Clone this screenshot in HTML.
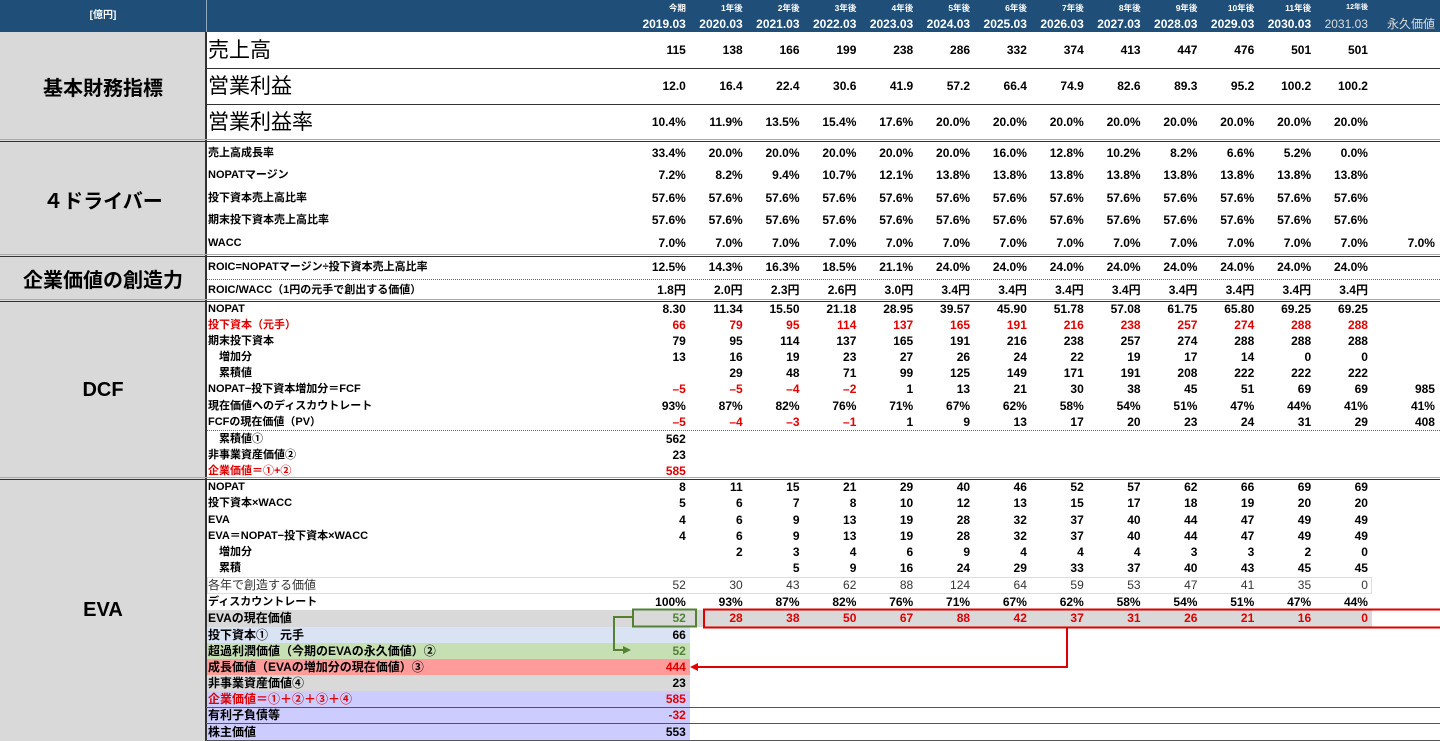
<!DOCTYPE html>
<html><head><meta charset="utf-8">
<style>
*{margin:0;padding:0;box-sizing:border-box}
body{width:1440px;height:741px;background:#fff;position:relative;overflow:hidden;font-family:"Liberation Sans","Noto Sans CJK JP",sans-serif;font-size:11px;color:#000}
.a{position:absolute}
.hd{position:absolute;left:0;top:0;width:1440px;height:32px;background:#1f4e79;color:#fff}
.hr{position:absolute;left:633px;display:flex}
.hr i{font-style:normal;width:56.85px;text-align:right;padding-right:4px;font-weight:bold}
.r{position:absolute;left:208px;display:flex;white-space:nowrap;font-weight:bold}
.r .l{width:425px;overflow:visible}
.r i{font-style:normal;width:56.85px;text-align:right;padding-right:4px;font-size:12px}
.r i.p{width:66px;padding-right:3px}
.red{color:#e00000}
.g{color:#548235}
.n{font-weight:normal}
.big{font-size:21px;font-weight:normal}
.b12{font-size:12px}
.sec{position:absolute;left:0;width:206px;display:flex;align-items:center;justify-content:center;font-size:20px;font-weight:bold}
.ln{position:absolute;left:206px;width:1234px;height:1px;background:#333}
.sl{position:absolute;left:0;width:1440px;height:3px;border-top:1px solid #aaa;border-bottom:1px solid #333}
</style></head><body>
<div class="a" style="left:0;top:32px;width:206px;height:709px;background:#d9d9d9"></div>
<div class="a" style="left:205px;top:32px;width:2px;height:709px;background:#333"></div>
<div class="hd">
<div class="a" style="left:0;top:0;width:206px;height:32px;line-height:32px;text-align:center;font-size:10px;font-weight:bold">[億円]</div>
<div class="a" style="left:206px;top:0;width:1px;height:32px;background:#fff;opacity:.5"></div>
<div class="hr" style="top:3px;font-size:8.5px;line-height:10px"><i>今期</i><i>1年後</i><i>2年後</i><i>3年後</i><i>4年後</i><i>5年後</i><i>6年後</i><i>7年後</i><i>8年後</i><i>9年後</i><i>10年後</i><i>11年後</i><i style="font-size:7px">12年後</i></div>
<div class="hr" style="top:17px;font-size:12px;line-height:14px"><i>2019.03</i><i>2020.03</i><i>2021.03</i><i>2022.03</i><i>2023.03</i><i>2024.03</i><i>2025.03</i><i>2026.03</i><i>2027.03</i><i>2028.03</i><i>2029.03</i><i>2030.03</i><i style="font-weight:normal;color:#ddd">2031.03</i><i style="width:66px;font-weight:normal;color:#ddd;padding-right:3px">永久価値</i></div>
</div>

<div class="sec" style="top:33px;height:107px">基本財務指標</div>
<div class="sec" style="top:143px;height:112px">４ドライバー</div>
<div class="sec" style="top:257px;height:43px">企業価値の創造力</div>
<div class="sec" style="top:302px;height:176px">DCF</div>
<div class="sec" style="top:480px;height:261px">EVA</div>

<div class="r" style="top:33px;height:35px;line-height:35px"><span class="l big">売上高</span><i>115</i><i>138</i><i>166</i><i>199</i><i>238</i><i>286</i><i>332</i><i>374</i><i>413</i><i>447</i><i>476</i><i>501</i><i>501</i></div>
<div class="ln" style="top:68px"></div>
<div class="r" style="top:69px;height:35px;line-height:35px"><span class="l big">営業利益</span><i>12.0</i><i>16.4</i><i>22.4</i><i>30.6</i><i>41.9</i><i>57.2</i><i>66.4</i><i>74.9</i><i>82.6</i><i>89.3</i><i>95.2</i><i>100.2</i><i>100.2</i></div>
<div class="ln" style="top:104px"></div>
<div class="r" style="top:105px;height:35px;line-height:35px"><span class="l big">営業利益率</span><i>10.4%</i><i>11.9%</i><i>13.5%</i><i>15.4%</i><i>17.6%</i><i>20.0%</i><i>20.0%</i><i>20.0%</i><i>20.0%</i><i>20.0%</i><i>20.0%</i><i>20.0%</i><i>20.0%</i></div>
<div class="sl" style="top:139px"></div>

<div class="r" style="top:143px;height:20px;line-height:20px"><span class="l">売上高成長率</span><i>33.4%</i><i>20.0%</i><i>20.0%</i><i>20.0%</i><i>20.0%</i><i>20.0%</i><i>16.0%</i><i>12.8%</i><i>10.2%</i><i>8.2%</i><i>6.6%</i><i>5.2%</i><i>0.0%</i></div>
<div class="r" style="top:165px;height:20px;line-height:20px"><span class="l">NOPATマージン</span><i>7.2%</i><i>8.2%</i><i>9.4%</i><i>10.7%</i><i>12.1%</i><i>13.8%</i><i>13.8%</i><i>13.8%</i><i>13.8%</i><i>13.8%</i><i>13.8%</i><i>13.8%</i><i>13.8%</i></div>
<div class="r" style="top:188px;height:20px;line-height:20px"><span class="l">投下資本売上高比率</span><i>57.6%</i><i>57.6%</i><i>57.6%</i><i>57.6%</i><i>57.6%</i><i>57.6%</i><i>57.6%</i><i>57.6%</i><i>57.6%</i><i>57.6%</i><i>57.6%</i><i>57.6%</i><i>57.6%</i></div>
<div class="r" style="top:210px;height:20px;line-height:20px"><span class="l">期末投下資本売上高比率</span><i>57.6%</i><i>57.6%</i><i>57.6%</i><i>57.6%</i><i>57.6%</i><i>57.6%</i><i>57.6%</i><i>57.6%</i><i>57.6%</i><i>57.6%</i><i>57.6%</i><i>57.6%</i><i>57.6%</i></div>
<div class="r" style="top:233px;height:20px;line-height:20px"><span class="l">WACC</span><i>7.0%</i><i>7.0%</i><i>7.0%</i><i>7.0%</i><i>7.0%</i><i>7.0%</i><i>7.0%</i><i>7.0%</i><i>7.0%</i><i>7.0%</i><i>7.0%</i><i>7.0%</i><i>7.0%</i><i class="p">7.0%</i></div>
<div class="sl" style="top:254px"></div>

<div class="r" style="top:257px;height:21px;line-height:21px"><span class="l">ROIC=NOPATマージン÷投下資本売上高比率</span><i>12.5%</i><i>14.3%</i><i>16.3%</i><i>18.5%</i><i>21.1%</i><i>24.0%</i><i>24.0%</i><i>24.0%</i><i>24.0%</i><i>24.0%</i><i>24.0%</i><i>24.0%</i><i>24.0%</i></div>
<div class="a" style="left:207px;top:279px;width:1233px;border-top:1px dotted #666"></div>
<div class="r" style="top:280px;height:20px;line-height:20px"><span class="l">ROIC/WACC（1円の元手で創出する価値）</span><i>1.8円</i><i>2.0円</i><i>2.3円</i><i>2.6円</i><i>3.0円</i><i>3.4円</i><i>3.4円</i><i>3.4円</i><i>3.4円</i><i>3.4円</i><i>3.4円</i><i>3.4円</i><i>3.4円</i></div>
<div class="sl" style="top:299px"></div>

<div class="r" style="top:301px;height:16px;line-height:16px"><span class="l">NOPAT</span><i>8.30</i><i>11.34</i><i>15.50</i><i>21.18</i><i>28.95</i><i>39.57</i><i>45.90</i><i>51.78</i><i>57.08</i><i>61.75</i><i>65.80</i><i>69.25</i><i>69.25</i></div>
<div class="r red" style="top:317px;height:16px;line-height:16px"><span class="l">投下資本（元手）</span><i>66</i><i>79</i><i>95</i><i>114</i><i>137</i><i>165</i><i>191</i><i>216</i><i>238</i><i>257</i><i>274</i><i>288</i><i>288</i></div>
<div class="r" style="top:333px;height:16px;line-height:16px"><span class="l">期末投下資本</span><i>79</i><i>95</i><i>114</i><i>137</i><i>165</i><i>191</i><i>216</i><i>238</i><i>257</i><i>274</i><i>288</i><i>288</i><i>288</i></div>
<div class="r" style="top:349px;height:16px;line-height:16px"><span class="l">　増加分</span><i>13</i><i>16</i><i>19</i><i>23</i><i>27</i><i>26</i><i>24</i><i>22</i><i>19</i><i>17</i><i>14</i><i>0</i><i>0</i></div>
<div class="r" style="top:365px;height:16px;line-height:16px"><span class="l">　累積値</span><i></i><i>29</i><i>48</i><i>71</i><i>99</i><i>125</i><i>149</i><i>171</i><i>191</i><i>208</i><i>222</i><i>222</i><i>222</i></div>
<div class="r" style="top:381px;height:16px;line-height:16px"><span class="l">NOPAT−投下資本増加分＝FCF</span><i class="red">–5</i><i class="red">–5</i><i class="red">–4</i><i class="red">–2</i><i>1</i><i>13</i><i>21</i><i>30</i><i>38</i><i>45</i><i>51</i><i>69</i><i>69</i><i class="p">985</i></div>
<div class="r" style="top:398px;height:16px;line-height:16px"><span class="l">現在価値へのディスカウトレート</span><i>93%</i><i>87%</i><i>82%</i><i>76%</i><i>71%</i><i>67%</i><i>62%</i><i>58%</i><i>54%</i><i>51%</i><i>47%</i><i>44%</i><i>41%</i><i class="p">41%</i></div>
<div class="r" style="top:414px;height:16px;line-height:16px"><span class="l">FCFの現在価値（PV）</span><i class="red">–5</i><i class="red">–4</i><i class="red">–3</i><i class="red">–1</i><i>1</i><i>9</i><i>13</i><i>17</i><i>20</i><i>23</i><i>24</i><i>31</i><i>29</i><i class="p">408</i></div>
<div class="a" style="left:207px;top:430px;width:1233px;border-top:1px dotted #666"></div>
<div class="r" style="top:431px;height:16px;line-height:16px"><span class="l">　累積値①</span><i>562</i></div>
<div class="r" style="top:447px;height:16px;line-height:16px"><span class="l">非事業資産価値②</span><i>23</i></div>
<div class="r red" style="top:463px;height:16px;line-height:16px"><span class="l">企業価値＝①+②</span><i>585</i></div>
<div class="sl" style="top:477px"></div>

<div class="r" style="top:479px;height:16px;line-height:16px"><span class="l">NOPAT</span><i>8</i><i>11</i><i>15</i><i>21</i><i>29</i><i>40</i><i>46</i><i>52</i><i>57</i><i>62</i><i>66</i><i>69</i><i>69</i></div>
<div class="r" style="top:495px;height:16px;line-height:16px"><span class="l">投下資本×WACC</span><i>5</i><i>6</i><i>7</i><i>8</i><i>10</i><i>12</i><i>13</i><i>15</i><i>17</i><i>18</i><i>19</i><i>20</i><i>20</i></div>
<div class="r" style="top:512px;height:16px;line-height:16px"><span class="l">EVA</span><i>4</i><i>6</i><i>9</i><i>13</i><i>19</i><i>28</i><i>32</i><i>37</i><i>40</i><i>44</i><i>47</i><i>49</i><i>49</i></div>
<div class="r" style="top:528px;height:16px;line-height:16px"><span class="l">EVA＝NOPAT−投下資本×WACC</span><i>4</i><i>6</i><i>9</i><i>13</i><i>19</i><i>28</i><i>32</i><i>37</i><i>40</i><i>44</i><i>47</i><i>49</i><i>49</i></div>
<div class="r" style="top:544px;height:16px;line-height:16px"><span class="l">　増加分</span><i></i><i>2</i><i>3</i><i>4</i><i>6</i><i>9</i><i>4</i><i>4</i><i>4</i><i>3</i><i>3</i><i>2</i><i>0</i></div>
<div class="r" style="top:560px;height:16px;line-height:16px"><span class="l">　累積</span><i></i><i></i><i>5</i><i>9</i><i>16</i><i>24</i><i>29</i><i>33</i><i>37</i><i>40</i><i>43</i><i>45</i><i>45</i></div>
<div class="a" style="left:207px;top:577px;width:1165px;height:17px;border:1px solid #ddd"></div>
<div class="r n" style="top:577px;height:16px;line-height:16px;color:#333;font-weight:normal"><span class="l b12">各年で創造する価値</span><i>52</i><i>30</i><i>43</i><i>62</i><i>88</i><i>124</i><i>64</i><i>59</i><i>53</i><i>47</i><i>41</i><i>35</i><i>0</i></div>
<div class="r" style="top:594px;height:16px;line-height:16px"><span class="l">ディスカウントレート</span><i>100%</i><i>93%</i><i>87%</i><i>82%</i><i>76%</i><i>71%</i><i>67%</i><i>62%</i><i>58%</i><i>54%</i><i>51%</i><i>47%</i><i>44%</i></div>
<div class="a" style="left:207px;top:610px;width:1165px;height:17px;background:#d9d9d9"></div>
<div class="r" style="top:610px;height:17px;line-height:17px"><span class="l b12">EVAの現在価値</span><i class="g">52</i><i class="red">28</i><i class="red">38</i><i class="red">50</i><i class="red">67</i><i class="red">88</i><i class="red">42</i><i class="red">37</i><i class="red">31</i><i class="red">26</i><i class="red">21</i><i class="red">16</i><i class="red">0</i></div>
<div class="a" style="left:207px;top:627px;width:483px;height:16px;background:#dae3f3"></div>
<div class="a" style="left:207px;top:643px;width:483px;height:16px;background:#c6e0b4"></div>
<div class="a" style="left:207px;top:659px;width:483px;height:16px;background:#ff9b9b"></div>
<div class="a" style="left:207px;top:675px;width:483px;height:16px;background:#d9d9d9"></div>
<div class="a" style="left:207px;top:691px;width:483px;height:50px;background:#ccccff"></div>
<div class="r" style="top:627px;height:16px;line-height:16px"><span class="l b12">投下資本①　元手</span><i>66</i></div>
<div class="r g" style="top:643px;height:16px;line-height:16px"><span class="l b12" style="color:#000">超過利潤価値（今期のEVAの永久価値）②</span><i>52</i></div>
<div class="r" style="top:659px;height:16px;line-height:16px"><span class="l b12">成長価値（EVAの増加分の現在価値）③</span><i class="red">444</i></div>
<div class="r" style="top:675px;height:16px;line-height:16px"><span class="l b12">非事業資産価値④</span><i>23</i></div>
<div class="r red" style="top:691px;height:16px;line-height:16px"><span class="l b12">企業価値＝①＋②＋③＋④</span><i>585</i></div>
<div class="ln" style="top:707px;background:#555"></div>
<div class="r" style="top:708px;height:15px;line-height:15px"><span class="l b12">有利子負債等</span><i class="red">-32</i></div>
<div class="ln" style="top:723px;background:#555"></div>
<div class="r" style="top:724px;height:16px;line-height:16px"><span class="l b12">株主価値</span><i>553</i></div>
<div class="ln" style="top:740px;background:#555"></div>

<svg class="a" style="left:0;top:0" width="1440" height="741">
<rect x="633" y="609.5" width="63" height="17" fill="none" stroke="#548235" stroke-width="2"/>
<polyline points="633,617 614,617 614,650 624,650" fill="none" stroke="#548235" stroke-width="2"/>
<polygon points="631,650 623,646 623,654" fill="#548235"/>
<rect x="704" y="609.5" width="740" height="18" fill="none" stroke="#e00000" stroke-width="2"/>
<polyline points="1067,627 1067,667 698,667" fill="none" stroke="#e00000" stroke-width="2"/>
<polygon points="690,667 698,663 698,671" fill="#e00000"/>
</svg>
</body></html>
